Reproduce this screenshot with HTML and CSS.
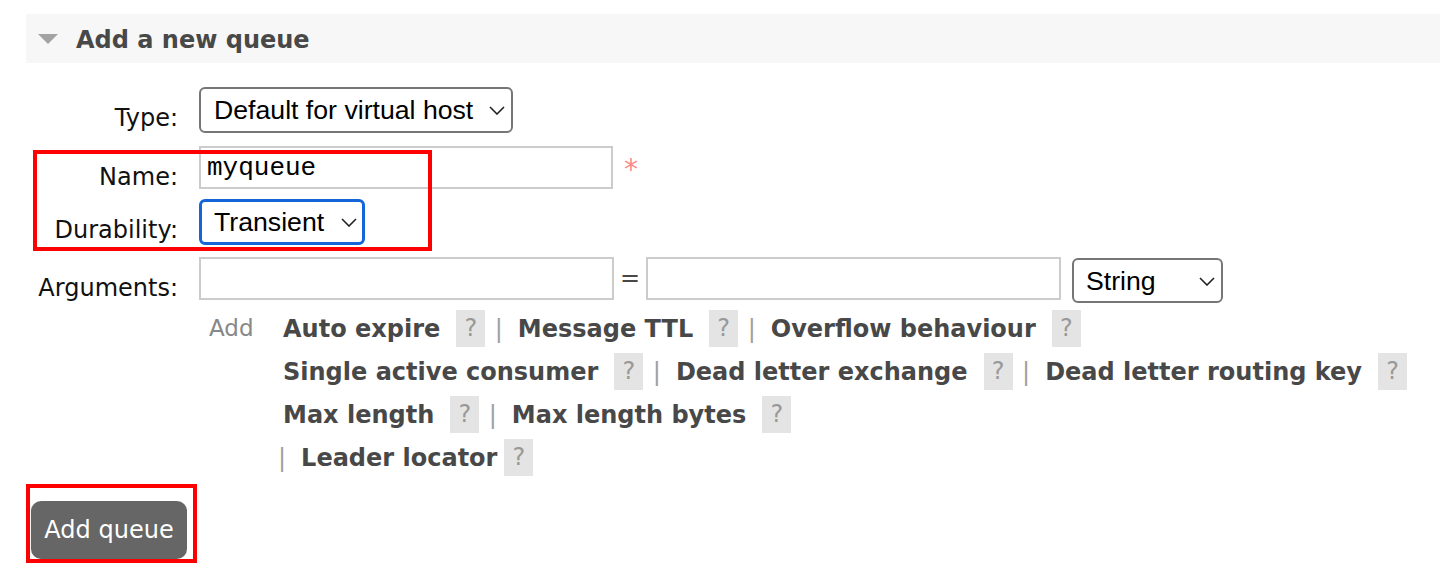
FILE: index.html
```html
<!DOCTYPE html>
<html lang="en">
<head>
<meta charset="utf-8">
<title>Add a new queue</title>
<link rel="stylesheet" href="styles.css">
</head>
<body>
<div class="section">
  <h2 class="section-head"><span class="tri"></span>Add a new queue</h2>
  <div class="form">
    <div class="row row-type">
      <label class="lbl">Type:</label>
      <div class="sel sel-type">
        <select><option>Default for virtual host</option></select>
        <svg class="chev" viewBox="0 0 16 9"><polyline points="1,1 8,8 15,1"/></svg>
      </div>
    </div>
    <div class="row row-name">
      <label class="lbl">Name:</label>
      <input class="txt txt-name" type="text" value="myqueue">
      <span class="mand">*</span>
    </div>
    <div class="row row-dur">
      <label class="lbl">Durability:</label>
      <div class="sel sel-dur">
        <select><option>Transient</option></select>
        <svg class="chev" viewBox="0 0 16 9"><polyline points="1,1 8,8 15,1"/></svg>
      </div>
    </div>
    <div class="row row-args">
      <label class="lbl">Arguments:</label>
      <input class="txt txt-arg" type="text" value="">
      <span class="eq">=</span>
      <input class="txt txt-arg" type="text" value="">
      <div class="sel sel-str">
        <select><option>String</option></select>
        <svg class="chev" viewBox="0 0 16 9"><polyline points="1,1 8,8 15,1"/></svg>
      </div>
    </div>
    <div class="row row-help">
      <span class="lbl lbl-empty"></span>
      <span class="add">Add</span>
      <div class="links">
        <div class="line"><span class="arg">Auto expire</span><span class="help">?</span><span class="sep">|</span><span class="arg">Message TTL</span><span class="help">?</span><span class="sep">|</span><span class="arg">Overflow behaviour</span><span class="help">?</span></div>
        <div class="line"><span class="arg">Single active consumer</span><span class="help">?</span><span class="sep">|</span><span class="arg">Dead letter exchange</span><span class="help">?</span><span class="sep">|</span><span class="arg">Dead letter routing key</span><span class="help">?</span></div>
        <div class="line"><span class="arg">Max length</span><span class="help">?</span><span class="sep">|</span><span class="arg">Max length bytes</span><span class="help">?</span></div>
        <div class="line line-last"><span class="sep sep-lead">|</span><span class="arg">Leader locator</span><span class="help help-tight">?</span></div>
      </div>
    </div>
  </div>
  <button class="submit" type="button">Add queue</button>
</div>
<div class="mark mark-name"></div>
<div class="mark mark-btn"></div>
</body>
</html>
```
FILE: styles.css
```css
* { box-sizing: border-box; }

body {
  margin: 0;
  background: #fff;
  font-family: "DejaVu Sans", Verdana, sans-serif;
  font-size: 24px;
  color: #111;
}

.section {
  margin-left: 26px;
  padding-top: 14px;
}

.section-head {
  margin: 0;
  height: 49px;
  background: #f7f7f7;
  display: flex;
  align-items: center;
  padding-left: 12px;
  padding-top: 3px;
  font-size: 24px;
  font-weight: bold;
  color: #484848;
}

.tri {
  width: 0;
  height: 0;
  border-left: 10.5px solid transparent;
  border-right: 10.5px solid transparent;
  border-top: 10px solid #a3a3a3;
  margin-right: 18px;
  margin-top: -2px;
}

.form { padding-top: 24px; }

.row {
  display: flex;
  align-items: flex-start;
}

.lbl {
  width: 152px;
  height: 43px;
  flex: none;
  text-align: right;
  margin-right: 21px;
  line-height: 28px;
  padding-top: 17px;
  white-space: nowrap;
}

.lbl-empty { padding-top: 0; height: auto; }

.row-name { margin-top: 13px; }
.row-dur { margin-top: 10px; }
.row-args { margin-top: 12px; }
.row-help { margin-top: 5px; }

.sel {
  position: relative;
  flex: none;
}

.sel select {
  appearance: none;
  -webkit-appearance: none;
  display: block;
  height: 46px;
  border: 2px solid #767676;
  border-radius: 6px;
  background: #fff;
  font-family: "Liberation Sans", Arial, sans-serif;
  font-size: 26.67px;
  color: #000;
  padding: 0 0 0 13px;
  margin: 0;
  outline: none;
}

.sel-type select { width: 314px; }

.sel-dur select {
  width: 166px;
  border: 3px solid #1466d8;
  padding-left: 12px;
}

.sel-str { margin-left: 11px; margin-top: 1px; }
.sel-str select { width: 151px; height: 45px; padding-left: 12px; }

.chev {
  position: absolute;
  right: 8px;
  top: 19px;
  width: 16px;
  height: 9px;
  fill: none;
  stroke: #222;
  stroke-width: 1.6;
  pointer-events: none;
}

.txt {
  flex: none;
  height: 43px;
  border: 2px solid #ccc;
  border-radius: 0;
  font-family: "Liberation Mono", monospace;
  font-size: 26px;
  padding: 0 6px;
  margin: 0;
  color: #000;
  outline: none;
  background: #fff;
}

.txt-name { width: 414px; }
.txt-arg { width: 415px; }

.mand {
  color: #f88;
  font-size: 28px;
  line-height: 1;
  margin-left: 11px;
  padding-top: 10px;
}

.eq {
  width: 32px;
  text-align: center;
  line-height: 43px;
  color: #484848;
}

.add {
  flex: none;
  width: 84px;
  padding-left: 10px;
  padding-top: 6px;
  font-size: 23px;
  line-height: 28px;
  color: #888;
}

.links { flex: none; }

.line {
  height: 43px;
  line-height: 43px;
  white-space: nowrap;
  color: #484848;
}

.line-last { margin-left: -5px; }

.arg { font-weight: bold; }

.help {
  display: inline-block;
  vertical-align: top;
  margin-top: 2px;
  margin-left: 16px;
  width: 29px;
  height: 37px;
  line-height: 37px;
  text-align: center;
  background: #e4e4e4;
  color: #999;
  font-weight: normal;
}

.help-tight { margin-left: 7px; }

.sep {
  color: #a0a0a0;
  margin: 0 15px 0 9.5px;
}

.sep-lead { margin: 0 15px 0 0; }

.submit {
  display: block;
  margin: 21px 0 0 5px;
  width: 156px;
  height: 58px;
  padding: 0;
  border: none;
  border-radius: 10px;
  background: #666;
  color: #fff;
  font-family: "DejaVu Sans", Verdana, sans-serif;
  font-size: 24px;
}

.mark {
  position: absolute;
  border: 4px solid #f00;
}

.mark-name {
  left: 33px;
  top: 150px;
  width: 399px;
  height: 101px;
}

.mark-btn {
  left: 26px;
  top: 484px;
  width: 171px;
  height: 79px;
}
```
